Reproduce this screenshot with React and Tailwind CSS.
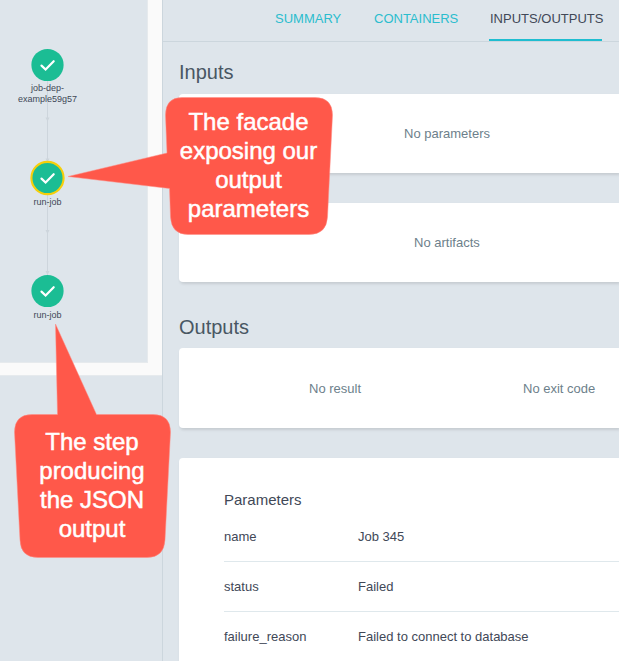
const nodes = [
  { label: ["job-dep-", "example59g57"], top: "top-[49px]", gap: "mt-[2px]", selected: false },
  { label: ["run-job"], top: "top-[162px]", gap: "mt-[3px]", selected: true },
  { label: ["run-job"], top: "top-[275px]", gap: "mt-[3px]", selected: false },
];

const parameters = [
  ["name", "Job 345"],
  ["status", "Failed"],
  ["failure_reason", "Failed to connect to database"],
];

function Node({ label, top, gap, selected }) {
  return (
    <div className={`absolute left-0 flex w-[95px] flex-col items-center ${top}`}>
      <svg width="37" height="36" viewBox="-18.5 -18 37 36" className="-my-[2px] shrink-0">
        <circle r="16.1" fill="#1bbd94" stroke={selected ? "#f7cf0a" : "none"} strokeWidth="2.1" />
        <path d="M-6 .6L-1.9 4.5L6.2 -3.8" fill="none" stroke="#fff" strokeWidth="2.2" strokeLinecap="round" strokeLinejoin="miter" />
      </svg>
      <div className={`text-center text-[9px] leading-[11px] whitespace-nowrap text-[#414857] ${gap}`}>
        {label.map((line) => (
          <div key={line}>{line}</div>
        ))}
      </div>
    </div>
  );
}

function Graph() {
  return (
    <div className="relative h-[363px] w-[148px] border-r border-b border-[#e6eaed] bg-[#dee5eb]">
      <svg className="absolute inset-0" width="147" height="361" fill="#cdd5dc">
        <path d="M47 80h1V162h-1zM47 193h1V275h-1z" />
        <path d="M45.5 117.5h4l-2 4zM45.5 158.5h4l-2 4zM45.5 230h4l-2 4zM45.5 271h4l-2 4z" />
      </svg>
      {nodes.map((node) => (
        <Node key={node.top} {...node} />
      ))}
    </div>
  );
}

function Card({ className, children }) {
  return (
    <div className={`rounded-l-[4px] bg-white text-[13px] text-[#6d7f8b] shadow-[1px_2px_3px_rgba(0,0,0,0.11)] ${className}`}>
      {children}
    </div>
  );
}

export default function App() {
  return (
    <div className="relative flex h-[661px] w-[619px] overflow-hidden bg-[#dee5eb] font-['Liberation_Sans',Arial,sans-serif]">
      <aside className="w-[162px] shrink-0">
        <div className="h-[376px] border-b border-[#e6eaed] bg-[#fafafa]">
          <Graph />
        </div>
      </aside>

      <main className="flex min-w-0 flex-1 flex-col border-l border-[#ccd6dd]">
        <nav className="flex h-[42px] shrink-0 items-start border-b border-[#ccd6dd] pl-[112px] text-[13px] leading-[37px] text-[#2bbdce]">
          <span className="w-[99px] shrink-0">SUMMARY</span>
          <span className="w-[115px] shrink-0">CONTAINERS</span>
          <span className="h-[41px] w-[113px] shrink-0 border-b-2 border-[#1fbdd0] text-[#414857]">
            <span className="ml-px">INPUTS/OUTPUTS</span>
          </span>
        </nav>

        <div className="pl-4">
          <h2 className="mt-[18px] h-[34px] text-[20px] leading-[24px] text-[#495763]">Inputs</h2>
          <Card className="flex h-[79px] items-center pl-[225px]">No parameters</Card>
          <Card className="mt-[30px] flex h-[79px] items-center pl-[235px]">No artifacts</Card>

          <h2 className="mt-[33px] h-[33px] text-[20px] leading-[24px] text-[#495763]">Outputs</h2>
          <Card className="flex h-[80px] items-center pt-px pl-[130px]">
            <span className="w-[214px]">No result</span>
            <span>No exit code</span>
          </Card>
          <Card className="mt-[30px] h-[220px] pt-[31px] pl-[45px]">
            <h3 className="mb-px text-[15px] leading-[22px] text-[#414857]">Parameters</h3>
            {parameters.map(([name, value]) => (
              <div key={name} className="flex h-[50px] items-center border-b border-[#dfe8ec] text-[#414857]">
                <span className="w-[134px] shrink-0">{name}</span>
                <span>{value}</span>
              </div>
            ))}
          </Card>
        </div>
      </main>

      <svg className="absolute inset-0" width="619" height="661" fill="#ff584a" stroke="#ff8d84" strokeWidth="0.5">
        <path d="M182 97.5H315Q332.5 97.5 332.5 115L327.5 217Q326.500 234.500 309 234.500H188Q171.500 234.500 170.500 217L169.500 188.500L68 176.500L167 153L165.500 115Q165.500 97.500 182 97.500Z" />
        <path d="M32 414.500H57.500L55.500 324L96.500 414.500H153Q170.500 414.500 170.500 432L165 540Q164 557.500 147 557.500H38Q20.500 557.500 20 540L14.500 432Q14.500 414.500 32 414.500Z" />
      </svg>
      <div className="absolute top-[107px] left-[165px] w-[167px] text-center text-[24px] leading-[29px] text-white [-webkit-text-stroke:0.5px_white]">
        <div>The facade</div>
        <div>exposing our</div>
        <div>output</div>
        <div>parameters</div>
      </div>
      <div className="absolute top-[427px] left-[14px] w-[156px] text-center text-[24px] leading-[29px] text-white [-webkit-text-stroke:0.5px_white]">
        <div>The step</div>
        <div>producing</div>
        <div>the JSON</div>
        <div>output</div>
      </div>
    </div>
  );
}
